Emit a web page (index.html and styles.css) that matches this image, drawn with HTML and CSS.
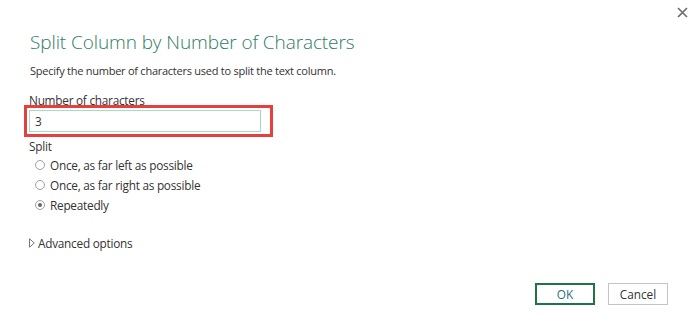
FILE: index.html
```html
<!doctype html>
<html lang="en">
<head>
<meta charset="utf-8">
<title>Split Column by Number of Characters</title>
<link rel="stylesheet" href="styles.css">
</head>
<body>
<div class="dialog">
  <button class="close" aria-label="Close">
    <svg width="11" height="11" viewBox="0 0 11 11"><path d="M1 1L10 10M10 1L1 10" stroke="#6b6b6b" stroke-width="1.6"/></svg>
  </button>
  <h1>Split Column by Number of Characters</h1>
  <p class="desc">Specify the number of characters used to split the text column.</p>

  <label class="label" for="count">Number of characters</label>
  <div class="field highlight">
    <input id="count" value="3">
  </div>

  <div class="label split">Split</div>
  <div class="options">
    <label class="opt"><span class="radio"></span>Once, as far left as possible</label>
    <label class="opt"><span class="radio"></span>Once, as far right as possible</label>
    <label class="opt"><span class="radio on"></span>Repeatedly</label>
  </div>

  <div class="advanced">
    <svg width="6" height="10" viewBox="0 0 6 10"><path d="M0.5 0.8L5.3 5L0.5 9.2Z" fill="none" stroke="#777" stroke-width="1"/></svg>
    <span>Advanced options</span>
  </div>

  <div class="footer">
    <button class="btn ok">OK</button>
    <button class="btn">Cancel</button>
  </div>
</div>
</body>
</html>
```

FILE: styles.css
```css
*{box-sizing:border-box}
body{margin:0;background:#fff;font-family:"Open Sans",sans-serif;color:#333;font-size:11.8px;letter-spacing:-0.25px}
.dialog{position:relative;width:699px;height:334px;padding:28px 30px 0 29px}
.close{position:absolute;top:7px;right:11px;border:0;background:none;padding:0;width:11px;height:11px;cursor:pointer}
.close svg{display:block}
h1{margin:0 0 5px 1px;font-size:19px;line-height:28px;font-weight:300;color:#2f7c67;letter-spacing:-0.1px}
.desc{margin:0 0 10px 1px;line-height:20px;font-size:11px}
.label{display:block;line-height:19px}
.field{position:relative;width:232px}
.field input{display:block;width:232px;height:22px;border:1px solid #a6dbbd;padding:0 5px;font:inherit;color:#333;outline:none}
.highlight::after{content:"";position:absolute;left:-5px;top:-5px;right:-12px;bottom:-5px;border:3px solid #e5403e;pointer-events:none}
.split{line-height:20px;margin-top:4px}
.options{padding-left:6px;margin-top:-1px}
.opt{display:flex;align-items:center;gap:5px;height:20px}
.radio{width:10px;height:10px;border:1px solid #a0a0a0;border-radius:50%;display:flex;align-items:center;justify-content:center}
.radio.on::after{content:"";width:4px;height:4px;border-radius:50%;background:#666}
.advanced{display:flex;align-items:center;gap:3px;height:20px;margin-top:18px}
.advanced svg{display:block}
.footer{display:flex;justify-content:flex-end;gap:13px;margin-top:30px;padding-right:1px}
.btn{width:60px;height:22px;border:1px solid #c4c4c4;background:#fff;font:inherit;color:#333;padding:0;cursor:pointer}
.btn.ok{border:2px solid #217346;color:#2a6f7f}
```
